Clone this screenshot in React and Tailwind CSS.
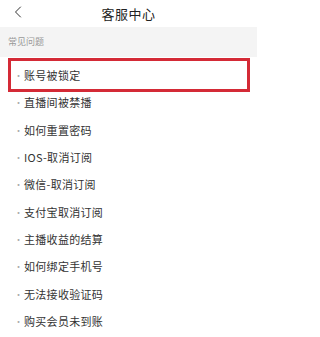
import { ChevronLeft } from "lucide-react";

const questions = [
  "账号被锁定",
  "直播间被禁播",
  "如何重置密码",
  "IOS-取消订阅",
  "微信-取消订阅",
  "支付宝取消订阅",
  "主播收益的结算",
  "如何绑定手机号",
  "无法接收验证码",
  "购买会员未到账",
];

const App = () => {
  return (
    <div
      className="w-[257px] h-[337px] bg-white overflow-hidden text-[#333]"
      style={{ fontFamily: '"Noto Sans CJK SC", "Noto Sans", sans-serif' }}
    >
      {/* header */}
      <div className="relative h-[27px] flex items-center justify-center">
        <ChevronLeft className="absolute left-[8px] top-[2px] text-[#333]" size={20} strokeWidth={1.2} />
        <h1 className="text-[13px] text-[#222] leading-none tracking-[0.5px]">客服中心</h1>
      </div>

      <div className="h-[30px] bg-[#f4f4f4] flex items-center pl-[8px]">
        <span className="text-[9px] text-[#999]">常见问题</span>
      </div>

      <ul className="pt-[5px]">
        {questions.map((q, i) => (
          <li key={q} className="relative h-[27.3px] flex items-center pl-[14px] text-[11px] leading-none">
            <span className="w-[10px] text-[#aaa] text-[9px]">·</span>
            <span className="text-[#333] tracking-[0.3px]">{q}</span>
            {i === 0 && (
              <div className="absolute left-[8px] right-[7px] top-[-4px] bottom-[-3px] border-[3px] border-[#d42a36]" />
            )}
          </li>
        ))}
      </ul>
    </div>
  );
};

export default App;
